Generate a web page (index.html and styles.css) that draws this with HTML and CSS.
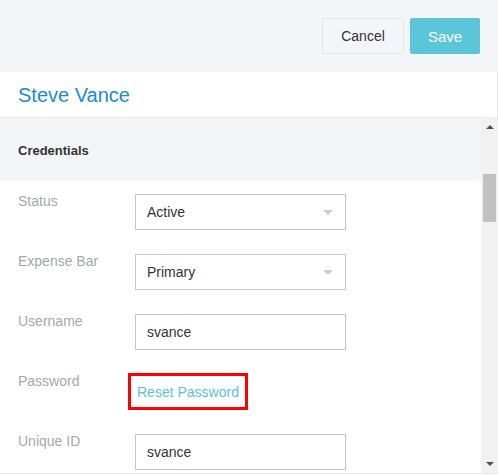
FILE: index.html
```html
<!DOCTYPE html>
<html>
<head>
<meta charset="utf-8">
<link rel="stylesheet" href="styles.css">
</head>
<body>
<div class="header">
  <button class="btn btn-cancel">Cancel</button>
  <button class="btn btn-save">Save</button>
</div>
<div class="titlebar"><h1 class="name">Steve Vance</h1></div>
<div class="scroller">
  <div class="content">
    <div class="section-head">Credentials</div>
    <div class="row">
      <div class="label">Status</div>
      <div class="field select"><span>Active</span><i class="caret"></i></div>
    </div>
    <div class="row">
      <div class="label">Expense Bar</div>
      <div class="field select"><span>Primary</span><i class="caret"></i></div>
    </div>
    <div class="row">
      <div class="label">Username</div>
      <div class="field"><span>svance</span></div>
    </div>
    <div class="row">
      <div class="label">Password</div>
      <div class="highlight"><a class="link">Reset Password</a></div>
    </div>
    <div class="row">
      <div class="label">Unique ID</div>
      <div class="field"><span>svance</span></div>
    </div>
  </div>
  <div class="scrollbar">
    <div class="arrow up"></div>
    <div class="track"><div class="thumb"></div></div>
    <div class="arrow down"></div>
  </div>
</div>
</body>
</html>
```
FILE: styles.css
```css
html, body {
  margin: 0;
  padding: 0;
  background: #ffffff;
  font-family: "Liberation Sans", Arial, sans-serif;
  overflow: hidden;
}
.header {
  height: 72px;
  background: #f3f6f9;
  display: flex;
  justify-content: flex-end;
  align-items: center;
  gap: 6px;
  padding-right: 18px;
  box-sizing: border-box;
}
.btn {
  height: 36px;
  border-radius: 2px;
  font-family: "Liberation Sans", Arial, sans-serif;
  cursor: pointer;
  padding: 0;
  margin-top: 0;
}
.btn-cancel {
  width: 82px;
  background: #f3f6f9;
  border: 1px solid #e1e5e9;
  color: #333333;
  font-size: 14px;
}
.btn-save {
  width: 70px;
  background: #5bc5da;
  border: 1px solid #5bc5da;
  color: #ffffff;
  font-size: 15px;
}
.titlebar {
  height: 45px;
  background: #ffffff;
  border-right: 1px solid #e2e2e2;
  border-bottom: 1px solid #e9edf0;
  display: flex;
  align-items: center;
  padding-left: 18px;
}
.name {
  margin: 0;
  font-size: 20px;
  font-weight: normal;
  color: #1b8bd6;
  line-height: 24px;
}
.scroller {
  height: 355px;
  display: flex;
  overflow: hidden;
  border-bottom: 1px solid #e6e6e6;
}
.content {
  flex: 1;
  overflow: hidden;
}
.section-head {
  height: 63px;
  background: #f3f6f9;
  padding-left: 18px;
  padding-top: 1px;
  box-sizing: border-box;
  display: flex;
  align-items: center;
  font-size: 13px;
  font-weight: bold;
  color: #333333;
}
.row {
  display: flex;
  align-items: flex-start;
  margin-bottom: 24px;
}
.section-head + .row {
  margin-top: 13px;
}
.label {
  width: 117px;
  padding-left: 18px;
  font-size: 14px;
  line-height: 16px;
  margin-top: -1px;
  color: #a4a8ac;
  flex-shrink: 0;
}
.field {
  width: 211px;
  height: 36px;
  box-sizing: border-box;
  border: 1px solid #c4c4c4;
  display: flex;
  align-items: center;
  padding-left: 11px;
  padding-right: 12px;
  font-size: 14px;
  color: #333333;
  background: #ffffff;
}
.field span {
  flex: 1;
}
.caret {
  width: 0;
  height: 0;
  border-left: 5px solid transparent;
  border-right: 5px solid transparent;
  border-top: 5px solid #cccccc;
}
.highlight {
  margin-left: -7px;
  margin-top: -1px;
  width: 120px;
  height: 37px;
  box-sizing: border-box;
  border: 3px solid #ff0000;
  display: flex;
  align-items: center;
  padding-left: 6px;
}
.link {
  font-size: 14px;
  color: #5bc0de;
  white-space: nowrap;
  cursor: pointer;
}
.scrollbar {
  width: 17px;
  background: #f1f1f1;
  display: flex;
  flex-direction: column;
  align-items: center;
}
.arrow {
  width: 0;
  height: 0;
  border-left: 4px solid transparent;
  border-right: 4px solid transparent;
}
.arrow.up {
  margin-top: 7px;
  border-bottom: 4px solid #505050;
}
.arrow.down {
  margin-bottom: 7px;
  border-top: 4px solid #505050;
}
.track {
  flex: 1;
  width: 13px;
}
.thumb {
  margin-top: 45px;
  height: 48px;
  background: #c1c1c1;
}
```
